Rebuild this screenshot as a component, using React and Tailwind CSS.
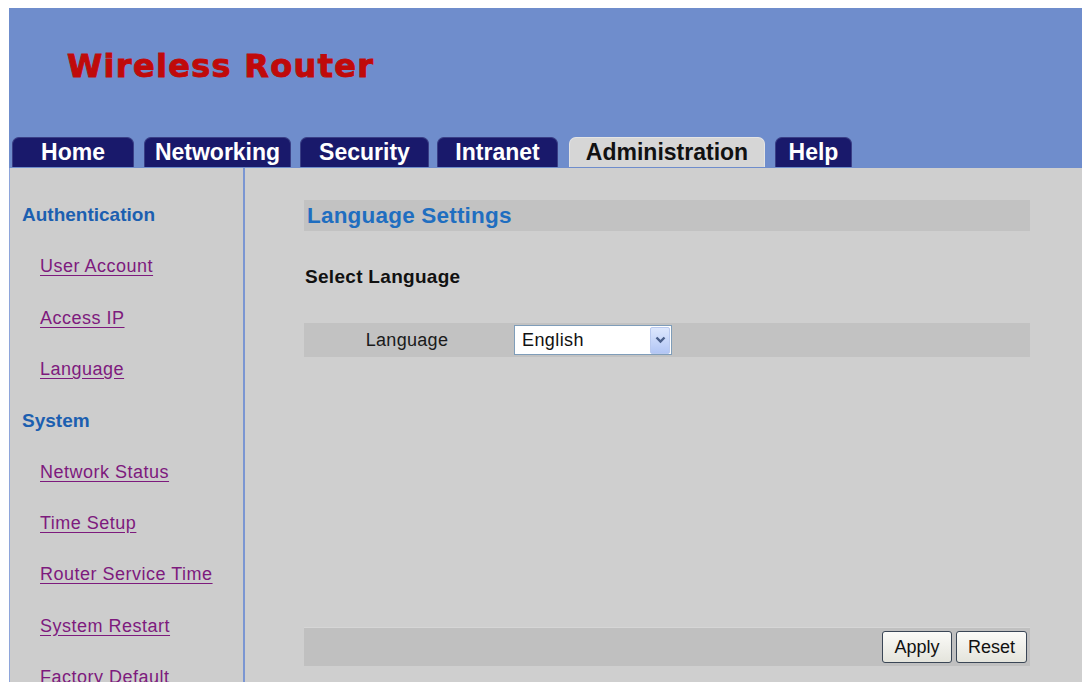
import React from "react";

const tabs = [
  { label: "Home", w: "w-[122px]", gap: "ml-0" },
  { label: "Networking", w: "w-[147px]", gap: "ml-[10px]" },
  { label: "Security", w: "w-[129px]", gap: "ml-[9px]" },
  { label: "Intranet", w: "w-[121px]", gap: "ml-[8px]" },
  { label: "Administration", w: "w-[196px]", gap: "ml-[11px]", active: true },
  { label: "Help", w: "w-[77px]", gap: "ml-[10px]" },
];

const menu = [
  { label: "Authentication", head: true },
  { label: "User Account" },
  { label: "Access IP" },
  { label: "Language" },
  { label: "System", head: true },
  { label: "Network Status" },
  { label: "Time Setup" },
  { label: "Router Service Time" },
  { label: "System Restart" },
  { label: "Factory Default" },
];

function Tab({ label, w, gap, active }) {
  return (
    <div
      className={
        "h-[30px] flex items-center justify-center rounded-t-[7px] border-x border-t text-[23px] font-bold leading-none " +
        w +
        " " +
        gap +
        (active
          ? " bg-[#d6d6d6] border-[#e4e4e4] text-[#111111]"
          : " bg-[#19196b] border-[#3a3f86] text-white")
      }
    >
      <span>{label}</span>
    </div>
  );
}

function ComboArrow() {
  return (
    <div className="w-[20px] h-[27px] rounded-[2px] border border-[#b9c9ef] bg-gradient-to-b from-[#dde7fd] to-[#b2c6f5] flex items-center justify-center">
      <svg width="11" height="8" viewBox="0 0 11 8">
        <path d="M1.5 1.5 L5.5 5.5 L9.5 1.5" fill="none" stroke="#4a5f8a" strokeWidth="2.4" />
      </svg>
    </div>
  );
}

function XpButton({ children, w }) {
  return (
    <button
      className={
        "h-[32px] rounded-[3px] border border-[#3a4656] bg-gradient-to-b from-[#fbfbf8] to-[#e4e4dc] text-[18px] leading-none text-[#111111] " +
        w
      }
    >
      {children}
    </button>
  );
}

export default function App() {
  return (
    <div
      className="w-[1082px] h-[682px] overflow-hidden bg-white pt-2 pl-[9px] flex flex-col"
      style={{ fontFamily: '"Liberation Sans", Arial, sans-serif' }}
    >
      {/* banner */}
      <div className="h-[160px] bg-[#6f8dcc] flex flex-col justify-between">
        <div
          className="pl-[58px] pt-[42px] text-[32px] font-bold leading-none text-[#c00a0a] tracking-[1.3px] [-webkit-text-stroke:0.9px_#c00a0a]"
          style={{ fontFamily: '"DejaVu Sans", Verdana, sans-serif' }}
        >
          Wireless Router
        </div>
        <div className="flex items-end pl-[3px] pb-[1px]">
          {tabs.map((t) => (
            <Tab key={t.label} {...t} />
          ))}
        </div>
      </div>

      <div className="flex flex-1 min-h-0">
        {/* left menu */}
        <div className="w-[236px] bg-[#cdcdcd] border-l border-[#8ea5da] border-r-2 border-r-[#7b96d2] pt-[22px] flex flex-col">
          {menu.map((m) =>
            m.head ? (
              <div
                key={m.label}
                className="h-[51.3px] shrink-0 flex items-center pl-[12px] text-[19px] font-bold text-[#1c5fb0]"
              >
                {m.label}
              </div>
            ) : (
              <div
                key={m.label}
                className="h-[51.3px] shrink-0 flex items-center pl-[30px]"
              >
                <a className="text-[18px] tracking-[0.5px] text-[#7d1a7d] underline underline-offset-[3px]">
                  {m.label}
                </a>
              </div>
            )
          )}
        </div>

        {/* settings panel */}
        <div className="flex-1 bg-[#cfcfcf] pl-[59px] pr-[52px] pt-[32px] flex flex-col">
          <div className="h-[31px] bg-[#c2c2c2] flex items-center pl-[3px] text-[22.5px] font-bold tracking-[0.2px] text-[#1f6ec0]">
            Language Settings
          </div>

          <div className="mt-[34px] h-[24px] flex items-center pl-[1px] text-[19px] font-bold tracking-[0.3px] text-[#111111]">
            Select Language
          </div>

          <div className="mt-[34px] h-[34px] bg-[#c2c2c2] flex items-center">
            <div className="w-[206px] text-center text-[18px] text-[#1a1a1a] tracking-[0.3px]">
              Language
            </div>
            <div className="ml-[4px] w-[158px] h-[30px] bg-white border border-[#7f9db9] flex items-center justify-between pl-[7px] pr-[1px]">
              <span className="text-[18px] text-[#111111] tracking-[0.4px]">English</span>
              <ComboArrow />
            </div>
          </div>

          <div className="mt-[270px] h-[39px] bg-[#c0c0c0] border-t border-[#d6d6d6] flex items-center justify-end gap-[4px] pr-[3px]">
            <XpButton w="w-[70px]">Apply</XpButton>
            <XpButton w="w-[71px]">Reset</XpButton>
          </div>
        </div>
      </div>
    </div>
  );
}
